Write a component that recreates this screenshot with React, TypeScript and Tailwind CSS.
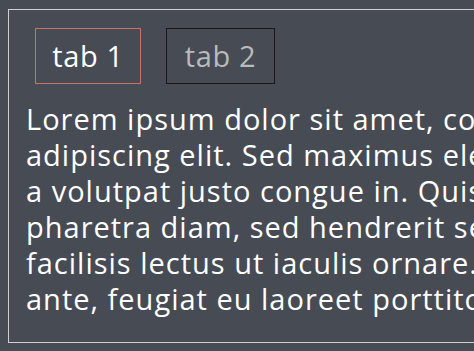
import { useState } from 'react'

const tabs = ['tab 1', 'tab 2']

const lines = [
  'Lorem ipsum dolor sit amet, consectetur',
  'adipiscing elit. Sed maximus eleifend nisl,',
  'a volutpat justo congue in. Quisque',
  'pharetra diam, sed hendrerit sem',
  'facilisis lectus ut iaculis ornare. Nam',
  'ante, feugiat eu laoreet porttitor.',
]

export default function App() {
  const [active, setActive] = useState(0)

  return (
    <div className="min-h-screen overflow-hidden bg-[#464b54] pt-[9px] pl-[8px] font-['Open_Sans','Lato',sans-serif]">
      <div className="w-[600px] h-[334px] border border-[#cfd0d2] pt-[18px] pl-[17px]">
        {/* Tabs */}
        <div className="ml-[9px] flex gap-[25px]">
          {tabs.map((tab, i) => (
            <button
              key={tab}
              onClick={() => setActive(i)}
              className={
                i === active
                  ? 'h-[56px] w-[106px] border border-[#c9706a] text-[29px] tracking-[0.6px] text-white'
                  : 'h-[56px] w-[109px] border border-[#16181c] text-[29px] tracking-[0.6px] text-[#b9babb]'
              }
            >
              {tab}
            </button>
          ))}
        </div>

        {/* Content */}
        <p className="mt-[17px] whitespace-nowrap text-[29px] leading-[36px] tracking-[1px] text-white">
          {lines.map((line) => (
            <span key={line} className="block">
              {line}
            </span>
          ))}
        </p>
      </div>
    </div>
  )
}
